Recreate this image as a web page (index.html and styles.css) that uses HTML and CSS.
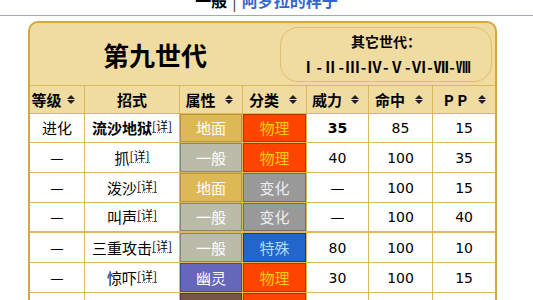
FILE: index.html
```html
<!DOCTYPE html>
<html lang="zh">
<head>
<meta charset="utf-8">
<title>第九世代</title>
<link rel="stylesheet" href="styles.css">
</head>
<body>
<div class="nav"><span class="cur">一般</span><span class="sep">|</span><a class="link">阿罗拉的样子</a></div>
<table class="moves">
  <colgroup>
    <col class="c1"><col class="c2"><col class="c3"><col class="c4"><col class="c5"><col class="c6"><col class="c7">
  </colgroup>
  <thead>
    <tr>
      <th colspan="7" class="gen-head">
        <div class="gen-wrap">
          <div class="gen-title">第九世代</div>
          <div class="gen-other">
            <div class="other-label">其它世代：</div>
            <div class="other-list">Ⅰ-Ⅱ-Ⅲ-Ⅳ-Ⅴ-Ⅵ-Ⅶ-Ⅷ</div>
          </div>
        </div>
      </th>
    </tr>
    <tr class="cols">
      <th class="sort">等级</th>
      <th>招式</th>
      <th class="sort">属性</th>
      <th class="sort">分类</th>
      <th class="sort">威力</th>
      <th class="sort">命中</th>
      <th class="sort">P P</th>
    </tr>
  </thead>
  <tbody>
    <tr>
      <td>进化</td>
      <td><b>流沙地狱</b><span class="d">[详]</span></td>
      <td class="t ground">地面</td>
      <td class="t phys">物理</td>
      <td class="n"><b>35</b></td>
      <td class="n">85</td>
      <td class="n">15</td>
    </tr>
    <tr>
      <td>—</td>
      <td>抓<span class="d">[详]</span></td>
      <td class="t normal">一般</td>
      <td class="t phys">物理</td>
      <td class="n">40</td>
      <td class="n">100</td>
      <td class="n">35</td>
    </tr>
    <tr>
      <td>—</td>
      <td>泼沙<span class="d">[详]</span></td>
      <td class="t ground">地面</td>
      <td class="t status">变化</td>
      <td class="n">—</td>
      <td class="n">100</td>
      <td class="n">15</td>
    </tr>
    <tr class="sepr">
      <td>—</td>
      <td>叫声<span class="d">[详]</span></td>
      <td class="t normal">一般</td>
      <td class="t status">变化</td>
      <td class="n">—</td>
      <td class="n">100</td>
      <td class="n">40</td>
    </tr>
    <tr>
      <td>—</td>
      <td>三重攻击<span class="d">[详]</span></td>
      <td class="t normal">一般</td>
      <td class="t spec">特殊</td>
      <td class="n">80</td>
      <td class="n">100</td>
      <td class="n">10</td>
    </tr>
    <tr>
      <td>—</td>
      <td>惊吓<span class="d">[详]</span></td>
      <td class="t ghost">幽灵</td>
      <td class="t phys">物理</td>
      <td class="n">30</td>
      <td class="n">100</td>
      <td class="n">15</td>
    </tr>
    <tr>
      <td>—</td>
      <td>拍落<span class="d">[详]</span></td>
      <td class="t dark">恶</td>
      <td class="t phys">物理</td>
      <td class="n">65</td>
      <td class="n">100</td>
      <td class="n">20</td>
    </tr>
  </tbody>
</table>
</body>
</html>
```

FILE: styles.css
```css
html, body {
  margin: 0;
  padding: 0;
  background: #ffffff;
}
body {
  font-family: "DejaVu Sans", "Noto Sans CJK SC", sans-serif;
  color: #000;
  overflow: hidden;
}
.nav {
  margin-top: -10px;
  height: 20px;
  line-height: 20px;
  padding-bottom: 5px;
  border-bottom: 1px solid #a2a9b1;
  text-align: center;
  font-family: "Noto Sans CJK SC", sans-serif;
  font-size: 16px;
  font-weight: bold;
}
.sep {
  color: #333;
  font-weight: normal;
  margin: 0 5px;
}
.link {
  color: #3366cc;
}
.moves {
  margin: 5px 0 0 28px;
  width: 469px;
  table-layout: fixed;
  border-collapse: separate;
  border-spacing: 0;
  border: 2px solid #d4a83e;
  border-radius: 10px;
  background: #f0dca0;
}
.c1 { width: 55px; }
.c2 { width: 95px; }
.c3 { width: 63px; }
.c4 { width: 64px; }
.c5 { width: 62px; }
.c6 { width: 64px; }
.c7 { width: 62px; }
.moves th, .moves td {
  padding: 0;
  border-right: 1px solid #dcb75c;
  border-bottom: 1px solid #dcb75c;
  text-align: center;
  box-sizing: border-box;
}
.moves th:last-child, .moves td:last-child {
  border-right: none;
}
.gen-head {
  height: 63px;
}
.gen-wrap {
  display: flex;
  align-items: center;
  height: 62px;
}
.gen-title {
  flex: 1;
  text-align: center;
  font-family: "Noto Sans CJK SC", sans-serif;
  font-size: 26px;
  font-weight: bold;
}
.gen-other {
  width: 212px;
  height: 55px;
  box-sizing: border-box;
  margin-right: 3px;
  border: 1px solid #dfbf68;
  border-radius: 18px;
  display: flex;
  flex-direction: column;
  align-items: center;
  justify-content: center;
  gap: 6px;
  font-family: "Noto Sans CJK SC", sans-serif;
  font-weight: bold;
}
.other-label {
  font-size: 14px;
  line-height: 20px;
}
.other-list {
  font-size: 15px;
  line-height: 20px;
  letter-spacing: 0.8px;
}
.cols th {
  height: 28px;
  font-family: "Noto Sans CJK SC", sans-serif;
  font-size: 15px;
  font-weight: bold;
  line-height: 20px;
}
.cols th.sort {
  position: relative;
  padding-right: 21px;
}
.cols th.sort:last-child {
  padding-right: 17px;
}
.cols th.sort::before,
.cols th.sort::after {
  content: "";
  position: absolute;
  right: 9px;
  width: 0;
  height: 0;
  border-left: 4px solid transparent;
  border-right: 4px solid transparent;
}
.cols th.sort::before {
  top: 9px;
  border-bottom: 4px solid #222;
}
.cols th.sort::after {
  top: 14px;
  border-top: 4px solid #222;
}
.moves td {
  height: 30px;
  background: #ffffff;
  font-family: "Noto Sans CJK SC", sans-serif;
  font-size: 15px;
  line-height: 20px;
}
.moves td.n {
  font-family: "DejaVu Sans", "Noto Sans CJK SC", sans-serif;
  font-size: 14px;
}
.moves tbody tr:first-child td {
  height: 29px;
}
.moves tr.sepr td {
  border-bottom-width: 2px;
}
.d {
  display: inline-block;
  font-family: "Noto Sans CJK SC", sans-serif;
  font-weight: normal;
  font-size: 12px;
  line-height: 13px;
  vertical-align: 3px;
  border-bottom: 1px dotted #778;
}
.moves td.t {
  color: #fff;
}
.t.ground { background: #dcb955; box-shadow: inset 0 0 0 1px #b69737; }
.t.normal { background: #bbbbaa; box-shadow: inset 0 0 0 1px #86866f; }
.t.ghost { background: #6666bb; box-shadow: inset 0 0 0 1px #4a4a90; }
.t.dark { background: #775544; box-shadow: inset 0 0 0 1px #553a2e; }
.moves td.phys { background: #ff4400; color: #ffd000; box-shadow: inset 0 0 0 1px #b83200; }
.moves td.status { background: #999999; color: #eeeeee; box-shadow: inset 0 0 0 1px #6e6e6e; }
.moves td.spec { background: #2266cc; color: #aaddff; box-shadow: inset 0 0 0 1px #163f7e; }
```
